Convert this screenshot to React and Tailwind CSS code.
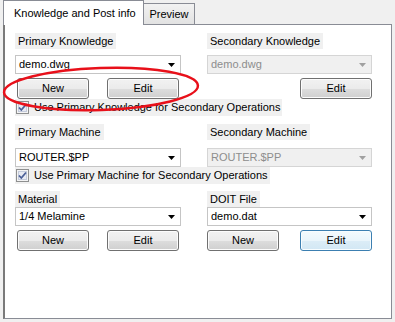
import React from 'react'

function Arrow({ disabled }) {
    return (
        <svg width="7" height="4" viewBox="0 0 7 4" className="mr-[5px]">
            <path d="M0 0 H7 L3.5 4 Z" fill={disabled ? '#a0a0a0' : '#000'} />
        </svg>
    )
}

function Combo({ value, disabled }) {
    return (
        <div
            className={`h-[19px] flex items-center justify-between border ${
                disabled ? 'border-[#d5d5d5] bg-[#f0f0f0] text-[#8d8d8d]' : 'border-[#c5c5c5] bg-white text-black'
            }`}
        >
            <span className="pl-[3px] leading-none">{value}</span>
            <Arrow disabled={disabled} />
        </div>
    )
}

function Btn({ children, focused }) {
    return (
        <div
            className={`w-[72px] h-[21px] rounded-[3px] border flex items-center justify-center leading-none ${
                focused
                    ? 'border-[#3c7fb1] bg-[linear-gradient(#f4fafd_0%,#eaf5fb_50%,#dcedf7_51%,#d2e7f4_100%)] shadow-[inset_0_0_0_1px_#f8fdff]'
                    : 'border-[#707070] bg-[linear-gradient(#f2f2f2_0%,#ebebeb_50%,#dddddd_51%,#cfcfcf_100%)] shadow-[inset_0_0_0_1px_#fcfcfc]'
            }`}
        >
            {children}
        </div>
    )
}

function Label({ children }) {
    return (
        <div className="flex">
            <span className="bg-[#f0f0f0] px-[3px] h-[16px] inline-flex items-center leading-none">{children}</span>
        </div>
    )
}

function Check({ children }) {
    return (
        <div className="flex">
            <div className="bg-[#f0f0f0] h-[17px] inline-flex items-center pl-[1px] pr-[2px]">
                <svg width="13" height="13" viewBox="0 0 13 13">
                    <rect x="0.5" y="0.5" width="12" height="12" fill="#f4f4f4" stroke="#8e8f8f" />
                    <rect x="2.5" y="2.5" width="8" height="8" fill="#e8ebf3" stroke="#c4cbdc" />
                    <path d="M3 6.5 L5.3 9 L10 3.5" fill="none" stroke="#4a5f97" strokeWidth="1.8" />
                </svg>
                <span className="ml-[5px] leading-none">{children}</span>
            </div>
        </div>
    )
}

export default function App() {
    return (
        <div
            className="relative w-[395px] h-[322px] bg-[#f0f0f0] text-[11px] text-black overflow-hidden"
            style={{ fontFamily: '"Liberation Sans", Arial, sans-serif' }}
        >
            {/* tab strip */}
            <div className="flex items-end h-[25px] pl-[3px] relative z-10">
                <div className="h-[25px] w-[141px] bg-white border border-b-0 border-[#898c95] flex items-center pl-[10px]">
                    Knowledge and Post info
                </div>
                <div className="h-[21px] mb-[1px] w-[51px] border border-l-0 border-b-0 border-[#898c95] bg-[linear-gradient(#f2f2f2,#e2e2e2)] flex items-center justify-center">
                    Preview
                </div>
            </div>

            {/* panel */}
            <div className="ml-[3px] -mt-[1px] w-[389px] h-[295px] bg-white border border-[#898c95] border-l-2 border-l-[#7a7a7a] pl-[10px] pt-[8px]">
                <div className="grid grid-cols-[166px_165px] gap-x-[26px]">
                    <div className="flex flex-col">
                        <Label>Primary Knowledge</Label>
                        <div className="mt-[6px]"><Combo value="demo.dwg" /></div>
                        <div className="mt-[4px] flex justify-between px-[2px]">
                            <Btn>New</Btn>
                            <Btn>Edit</Btn>
                        </div>
                    </div>
                    <div className="flex flex-col">
                        <Label>Secondary Knowledge</Label>
                        <div className="mt-[6px]"><Combo value="demo.dwg" disabled /></div>
                        <div className="mt-[4px] flex justify-end">
                            <Btn>Edit</Btn>
                        </div>
                    </div>
                </div>
                <Check>Use Primary Knowledge for Secondary Operations</Check>

                <div className="grid grid-cols-[166px_165px] gap-x-[26px] mt-[8px]">
                    <div className="flex flex-col">
                        <Label>Primary Machine</Label>
                        <div className="mt-[8px]"><Combo value="ROUTER.$PP" /></div>
                    </div>
                    <div className="flex flex-col">
                        <Label>Secondary Machine</Label>
                        <div className="mt-[8px]"><Combo value="ROUTER.$PP" disabled /></div>
                    </div>
                </div>
                <Check>Use Primary Machine for Secondary Operations</Check>

                <div className="grid grid-cols-[166px_165px] gap-x-[26px] mt-[7px]">
                    <div className="flex flex-col">
                        <Label>Material</Label>
                        <Combo value="1/4 Melamine" />
                        <div className="mt-[4px] flex justify-between px-[2px]">
                            <Btn>New</Btn>
                            <Btn>Edit</Btn>
                        </div>
                    </div>
                    <div className="flex flex-col">
                        <Label>DOIT File</Label>
                        <Combo value="demo.dat" />
                        <div className="mt-[4px] flex justify-between">
                            <Btn>New</Btn>
                            <Btn focused>Edit</Btn>
                        </div>
                    </div>
                </div>
            </div>

            {/* red annotation ellipse */}
            <svg className="absolute left-0 top-0 pointer-events-none" width="395" height="322">
                <ellipse cx="101" cy="89" rx="97" ry="21" fill="none" stroke="#e8101a" strokeWidth="2.5" transform="rotate(-2 101 89)" />
            </svg>
        </div>
    )
}
